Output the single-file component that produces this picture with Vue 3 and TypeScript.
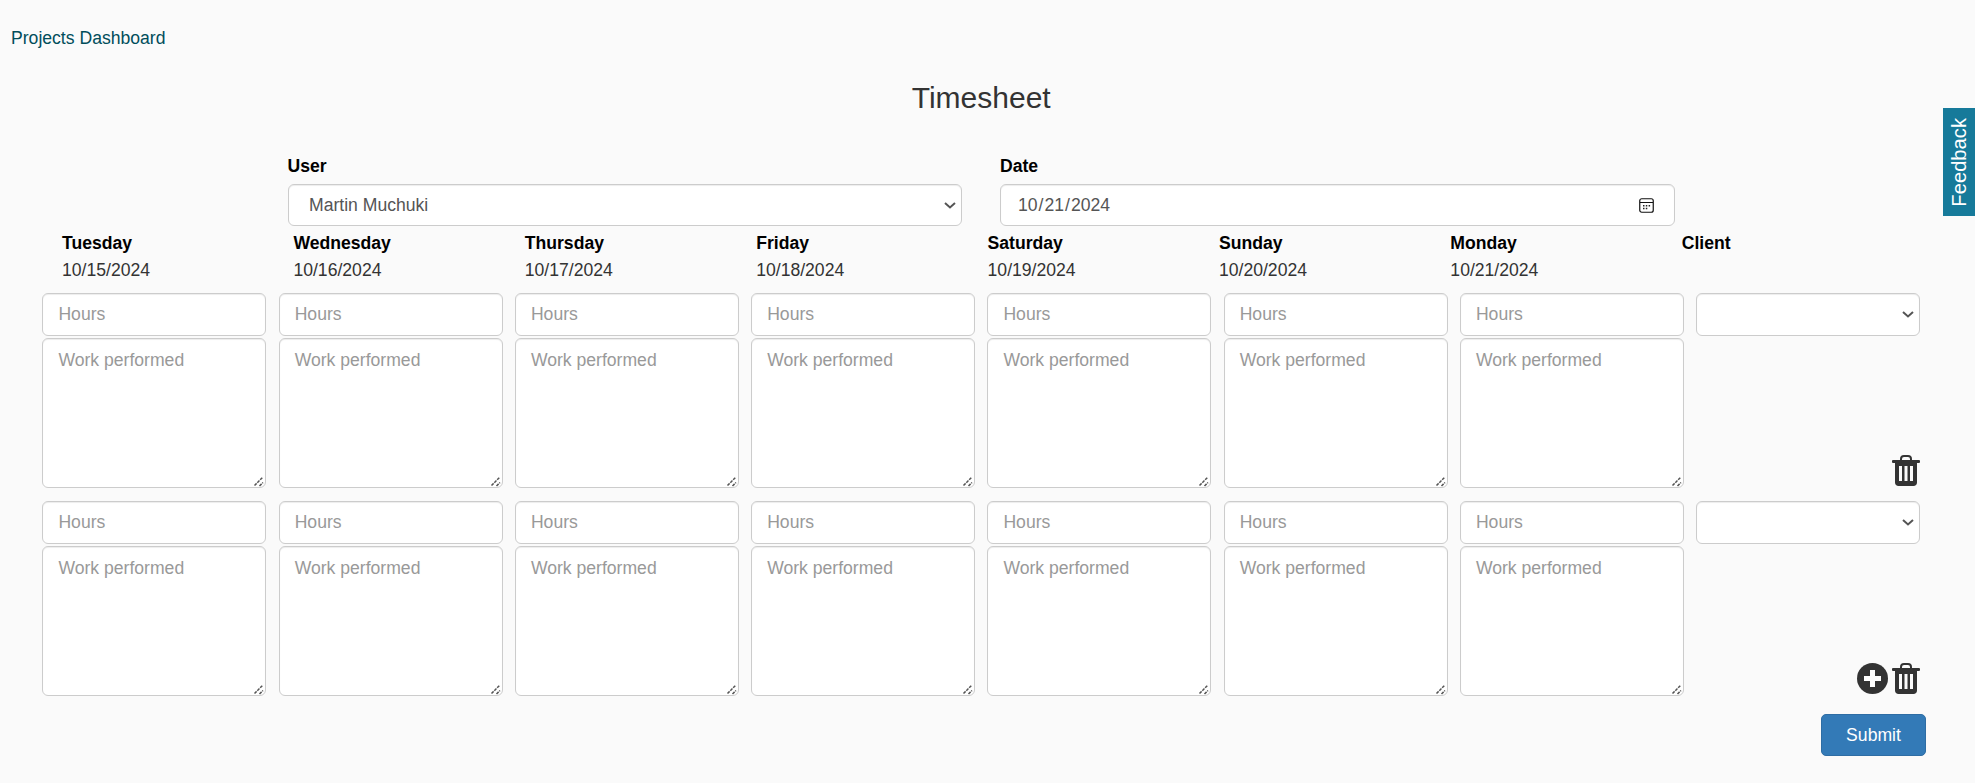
<template>
  <div class="page">
    <a class="dash-link" href="#">Projects Dashboard</a>
    <h1 class="title">Timesheet</h1>

    <div class="top-form">
      <div class="top-field">
        <label class="field-label">User</label>
        <select class="control user-select">
          <option>Martin Muchuki</option>
        </select>
      </div>
      <div class="top-field">
        <label class="field-label">Date</label>
        <input class="control date-input" type="date" value="2024-10-21" />
      </div>
    </div>

    <div class="day-header">
      <div v-for="d in dias" :key="d.nome" class="day-col">
        <div class="day-name">{{ d.nome }}</div>
        <div class="day-date">{{ d.data }}</div>
      </div>
      <div class="day-col">
        <div class="day-name">Client</div>
      </div>
    </div>

    <div v-for="(linha, i) in linhas" :key="linha" class="entry-row">
      <div v-for="d in dias" :key="d.nome" class="entry-cell">
        <input class="control hours" type="text" placeholder="Hours" />
        <textarea class="control work" placeholder="Work performed"></textarea>
      </div>
      <div class="entry-cell client-cell">
        <select class="control client-select">
          <option></option>
        </select>
        <div class="actions">
          <svg v-if="i === linhas.length - 1" class="icon-add" viewBox="0 0 31 31">
            <circle cx="15.5" cy="15.5" r="15.5" fill="#333" />
            <path d="M13 7h5v6h6v5h-6v6h-5v-6H7v-5h6z" fill="#fff" />
          </svg>
          <svg class="icon-trash" viewBox="0 0 28 31">
            <path d="M9 6V4C9 2.300 10.300 1 12 1h4c1.700 0 3 1.300 3 3v2" fill="none" stroke="#333" stroke-width="2" />
            <rect x="0" y="5" width="28" height="3" rx="1" fill="#333" />
            <path
              fill="#333"
              fill-rule="evenodd"
              d="M3 8h22v19.500c0 2-1.500 3.500-3.500 3.500h-15C4.500 31 3 29.500 3 27.500zM7 11v15h3V11zM12.500 11v15h3V11zM18 11v15h3V11z"
            />
          </svg>
        </div>
      </div>
    </div>

    <div class="submit-row">
      <button class="btn-submit" type="button">Submit</button>
    </div>

    <div class="feedback"><span>Feedback</span></div>
  </div>
</template>

<script setup lang="ts">
interface Dia {
  nome: string
  data: string
}

const dias: Dia[] = [
  { nome: 'Tuesday', data: '10/15/2024' },
  { nome: 'Wednesday', data: '10/16/2024' },
  { nome: 'Thursday', data: '10/17/2024' },
  { nome: 'Friday', data: '10/18/2024' },
  { nome: 'Saturday', data: '10/19/2024' },
  { nome: 'Sunday', data: '10/20/2024' },
  { nome: 'Monday', data: '10/21/2024' }
]

const linhas = [1, 2]
</script>

<style>
html,
body {
  background: #fafafa;
}
</style>

<style scoped>
.page {
  position: relative;
  height: 783px;
  overflow: hidden;
  box-sizing: border-box;
  padding-top: 28px;
  font-family: "Liberation Sans", Arial, sans-serif;
  font-size: 17.6px;
  line-height: 20px;
  color: #333;
}

.dash-link {
  display: block;
  margin-left: 11px;
  color: #004d5a;
  text-decoration: none;
}

.title {
  margin: 32px 0 40px;
  padding-right: 12.6px;
  font-size: 30px;
  line-height: 36px;
  font-weight: 400;
  text-align: center;
  color: #333;
}

.top-form {
  display: flex;
  gap: 38px;
  margin-left: 287.5px;
}

.top-field {
  width: 674.5px;
}

.field-label {
  display: block;
  margin-bottom: 8px;
  font-weight: 700;
  color: #000;
}

.control {
  display: block;
  box-sizing: border-box;
  width: 100%;
  border: 1px solid #ccc;
  border-radius: 6px;
  background-color: #fff;
  box-shadow: inset 0 1px 1px rgba(0, 0, 0, 0.075);
  font-family: inherit;
  font-size: 17.6px;
  color: #555;
  padding: 0 16px;
  margin: 0;
  outline: none;
}

.control::placeholder {
  color: #999;
}

.user-select,
.client-select {
  appearance: none;
  padding-left: 20.500px;
  background-image: url("data:image/svg+xml,%3Csvg xmlns='http://www.w3.org/2000/svg' width='12' height='7' viewBox='0 0 12 7'%3E%3Cpath d='M1 1l5 4.500L11 1' fill='none' stroke='%23555' stroke-width='2'/%3E%3C/svg%3E");
  background-repeat: no-repeat;
  background-size: 12px 7px;
  background-position: right 5px center;
}

.user-select,
.date-input {
  height: 42px;
}

.date-input::-webkit-calendar-picker-indicator {
  width: 15px;
  height: 15px;
  padding: 0;
  margin: 0 3.500px 0 0;
  background-image: url("data:image/svg+xml,%3Csvg xmlns='http://www.w3.org/2000/svg' width='15' height='15' viewBox='0 0 15 15'%3E%3Crect x='.75' y='.75' width='13.500' height='13.500' rx='2' fill='none' stroke='%23111' stroke-width='1.200'/%3E%3Cpath d='M1 4.500h13' stroke='%23111' stroke-width='1'/%3E%3Cpath d='M4 7h1.500v1.500H4zM6.800 7h1.500v1.500H6.800zM9.600 7h1.500v1.500H9.600zM4 9.800h1.500v1.500H4zM6.800 9.800h1.500v1.500H6.800z' fill='%23222'/%3E%3C/svg%3E");
  background-size: 15px 15px;
  background-repeat: no-repeat;
}

.day-header {
  display: grid;
  grid-template-columns: repeat(8, 231.4px);
  margin: 7px 0 13px 62px;
}

.day-name {
  font-weight: 700;
  color: #000;
}

.day-date {
  margin-top: 7px;
  color: #333;
}

.entry-row {
  display: grid;
  grid-template-columns: repeat(8, 224px);
  column-gap: 12.250px;
  margin: 0 0 13px 42.400px;
}

.entry-cell {
  display: flex;
  flex-direction: column;
  gap: 2px;
}

.hours,
.client-select {
  height: 43px;
}

.hours,
.work {
  padding-left: 15px;
}

.work {
  height: 150px;
  padding-top: 10px;
  padding-bottom: 9px;
  line-height: 22px;
  resize: both;
}

.work::-webkit-resizer {
  background-image: url("data:image/svg+xml,%3Csvg xmlns='http://www.w3.org/2000/svg' width='15' height='15' viewBox='0 0 15 15'%3E%3Cpath d='M4.500 13.500l8.500-8.500M9.500 14l3.500-3.500' stroke='%23555' stroke-width='1.500' stroke-dasharray='3 1'/%3E%3C/svg%3E");
  background-repeat: no-repeat;
}

.client-cell {
  gap: 0;
}

.actions {
  display: flex;
  justify-content: flex-end;
  align-items: flex-end;
  gap: 4px;
  flex: 1;
  padding-bottom: 2px;
}

.icon-add {
  width: 31px;
  height: 31px;
}

.icon-trash {
  width: 28px;
  height: 31px;
}

.submit-row {
  display: flex;
  justify-content: flex-end;
  margin: 18px 49px 0 0;
}

.btn-submit {
  width: 105px;
  height: 42px;
  border: 1px solid #2e6da4;
  border-radius: 5px;
  background: #337ab7;
  color: #fff;
  font-family: inherit;
  font-size: 17.6px;
}

.feedback {
  position: absolute;
  top: 108px;
  right: 0;
  width: 32px;
  height: 108px;
  display: flex;
  align-items: center;
  justify-content: center;
  background: #167a9a;
  color: #fff;
  font-size: 20.2px;
}

.feedback span {
  writing-mode: vertical-rl;
  transform: rotate(180deg);
}
</style>
